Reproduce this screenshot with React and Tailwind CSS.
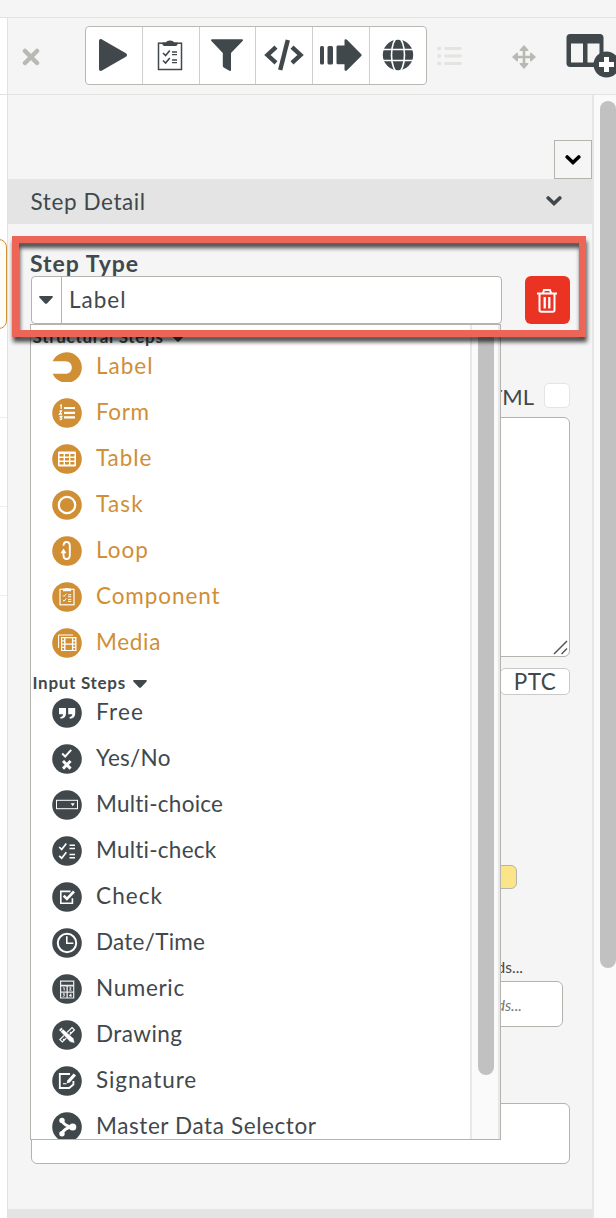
import React from "react";
import clsx from "clsx";

const Disc = ({ children }) => (
  <svg className="w-[30px] h-[30px] shrink-0" viewBox="0 0 30 30" fill="none">
    <circle cx="15" cy="15" r="14.8" fill="currentColor" />
    {children}
  </svg>
);

const LabelIcon = () => (
  <svg className="w-[30px] h-[30px] shrink-0" viewBox="0 0 30 30">
    <path
      fill="currentColor"
      d="M0.6 9.2A15.3 15.3 0 1 1 0.6 21.8H13.5C17.5 21.8 19.8 19 19.8 15.5S17.5 9.2 13.5 9.2Z"
    />
  </svg>
);

const FormIcon = () => (
  <Disc>
    <path d="M12 10h11M12 14.8h11M12 19.4h11" stroke="#fff" strokeWidth="2.2" />
    <path
      d="M8 7.5l1.2-.5v4M7.5 13h2l-2 3h2.5M7.5 18.3h2.3l-1.3 1.5c2 0 1.6 2.3-.9 1.8"
      stroke="#fff"
      strokeWidth="1.3"
    />
  </Disc>
);

const TableIcon = () => (
  <Disc>
    <rect x="6" y="7.4" width="18" height="15" rx="1.2" fill="#fff" />
    <path
      d="M7.6 10h4v2.4h-4zM13 10h4v2.4h-4zM18.4 10h4v2.4h-4zM7.6 14h4v2.4h-4zM13 14h4v2.4h-4zM18.4 14h4v2.4h-4zM7.6 18h4v2.4h-4zM13 18h4v2.4h-4zM18.4 18h4v2.4h-4z"
      fill="currentColor"
    />
  </Disc>
);

const TaskIcon = () => (
  <Disc>
    <circle cx="15" cy="15" r="8.2" stroke="#fff" strokeWidth="2.2" />
  </Disc>
);

const LoopIcon = () => (
  <Disc>
    <path
      d="M11.5 9.8C11.5 7.3 12.7 6 14.6 6s3.2 1.5 3.2 4v9c0 2.5-1.2 4-3.2 4s-3.1-1.3-3.1-3.5v-3"
      stroke="#fff"
      strokeWidth="1.9"
    />
    <path d="M11.5 12.5l3 4.7h-6z" fill="#fff" />
  </Disc>
);

const ComponentIcon = () => (
  <Disc>
    <rect x="8" y="7.3" width="14" height="15.5" stroke="#fff" strokeWidth="1.2" />
    <path d="M11 6.5h2.2c.3-.8 3.3-.8 3.6 0H19v2.7h-8z" fill="#fff" />
    <path
      d="M10.8 13.3l1.2 1.2 2.3-2.8M10.8 18l1.2 1.2 2.3-2.8M16 12.8h3.3M16 14.8h3.3M16 17.4h3.3M16 19.4h3.3"
      stroke="#fff"
      strokeWidth="1"
    />
  </Disc>
);

const MediaIcon = () => (
  <Disc>
    <path d="M6.6 20V7H21" stroke="#fff" strokeWidth="1" />
    <path d="M9 9h15.5v14H9z" fill="#fff" />
    <path
      d="M13.5 10.2h6.4v5.3h-6.4zM13.5 16.7h6.4V22h-6.4zM10.2 10.2h1.9v2h-1.9zM10.2 13.5h1.9v2h-1.9zM10.2 16.7h1.9v2h-1.9zM10.2 20h1.9v2h-1.9zM21.3 10.2h1.9v2h-1.9zM21.3 13.5h1.9v2h-1.9zM21.3 16.7h1.9v2h-1.9zM21.3 20h1.9v2h-1.9z"
      fill="currentColor"
    />
  </Disc>
);

const FreeIcon = () => (
  <Disc>
    <path
      d="M7 10h7v5.5c0 3-1.8 5-5.3 5.3l-.5-1.8c2-.4 2.9-1.4 2.9-2.8H7zM16.2 10h7v5.5c0 3-1.8 5-5.3 5.3l-.5-1.8c2-.4 2.9-1.4 2.9-2.8h-4.1z"
      fill="#fff"
    />
  </Disc>
);

const YesNoIcon = () => (
  <Disc>
    <path d="M10.2 9.5l3 3 6-6.7" stroke="#fff" strokeWidth="2" />
    <path d="M11 17l7.6 7.6M18.6 17L11 24.6" stroke="#fff" strokeWidth="2.9" />
  </Disc>
);

const MultiChoiceIcon = () => (
  <Disc>
    <rect x="4.5" y="10.3" width="21" height="8.4" stroke="#fff" strokeWidth="1" />
    <path d="M18.7 13.3h4l-2 3z" fill="#fff" />
  </Disc>
);

const MultiCheckIcon = () => (
  <Disc>
    <path d="M7.2 11l2.5 2.4 4.6-6M7.2 19.8l2.5 2.4 4.6-6" stroke="#fff" strokeWidth="1.7" />
    <path d="M17.5 9.3H23M17.5 12.4H23M17.5 18.4H23M17.5 21.7H23" stroke="#fff" strokeWidth="1.5" />
  </Disc>
);

const CheckIcon = () => (
  <Disc>
    <path d="M18.5 9.4H8.8v11.8h11.6v-5" stroke="#fff" strokeWidth="1.6" />
    <path d="M11.7 13.6l3.2 3.3L22 9.5" stroke="#fff" strokeWidth="2.6" />
  </Disc>
);

const ClockIcon = () => (
  <Disc>
    <circle cx="15" cy="15" r="9.2" stroke="#fff" strokeWidth="2" />
    <path d="M14.8 8.2v7h6.6" stroke="#fff" strokeWidth="1.6" />
  </Disc>
);

const NumericIcon = () => (
  <Disc>
    <path d="M8 6.5h14.3v18H8z" fill="#fff" opacity=".9" />
    <path d="M9.2 7.8h11.9v3H9.2zM9.2 12.4h5.3v5H9.2zM15.8 12.4h5.3v5h-5.3zM9.2 18.8h5.3v4.6H9.2zM15.8 18.8h5.3v4.6h-5.3z" fill="currentColor" />
    <path
      d="M11.2 13.8h1v2.8M17.3 13.8h1.8l-1.5 2.4h1.9M10.8 19.8h1.8l-1 1.3c1.4 0 1.2 1.5-.8 1.3M18.9 22.8v-3l-1.6 2h2.3"
      stroke="#fff"
      strokeWidth=".9"
    />
  </Disc>
);

const DrawingIcon = () => (
  <Disc>
    <path d="M20 7.5l2.4 2.4L10.3 22l-2.4-2.4zM18 12l1.6 1.6M11 19l1.6 1.6" stroke="#fff" strokeWidth="1.2" />
    <path d="M6.8 10l2.5-2.5 12.4 11 1 4.8-4.6-1.4z" fill="#fff" stroke="currentColor" strokeWidth=".5" />
    <path d="M8.5 11.7l2.6-2.6" stroke="currentColor" strokeWidth=".8" />
  </Disc>
);

const SignatureIcon = () => (
  <Disc>
    <path d="M18 8H7.8v14h9.4l4.2-3.5V15" stroke="#fff" strokeWidth="1.8" />
    <path d="M15.3 14.5l6.3-7 2.4 2-6.2 7-3 .8z" fill="#fff" />
    <path d="M11 17.7h3.5" stroke="#fff" strokeWidth="1.1" />
  </Disc>
);

const MasterIcon = () => (
  <Disc>
    <path d="M10 8.5c1.5 4 5 6 10.5 6.5-5.5.5-9 3-10.5 6.5" stroke="#fff" strokeWidth="2.8" />
    <circle cx="10" cy="8.5" r="2.7" fill="#fff" />
    <circle cx="20.7" cy="15" r="3.6" fill="#fff" />
    <circle cx="10" cy="21.7" r="2.7" fill="#fff" />
  </Disc>
);

const structuralSteps = [
  { label: "Label", icon: LabelIcon, spacing: "tracking-[1px]" },
  { label: "Form", icon: FormIcon, spacing: "tracking-[0.6px]" },
  { label: "Table", icon: TableIcon, spacing: "tracking-[0.9px]" },
  { label: "Task", icon: TaskIcon, spacing: "tracking-[1.2px]" },
  { label: "Loop", icon: LoopIcon, spacing: "tracking-[1px]" },
  { label: "Component", icon: ComponentIcon, spacing: "tracking-[0.9px]" },
  { label: "Media", icon: MediaIcon, spacing: "tracking-[0.7px]" },
];

const inputSteps = [
  { label: "Free", icon: FreeIcon, spacing: "tracking-[1.2px]" },
  { label: "Yes/No", icon: YesNoIcon, spacing: "tracking-[0.3px]" },
  { label: "Multi-choice", icon: MultiChoiceIcon, spacing: "tracking-[0.25px]" },
  { label: "Multi-check", icon: MultiCheckIcon, spacing: "tracking-[0.25px]" },
  { label: "Check", icon: CheckIcon, spacing: "tracking-[1.1px]" },
  { label: "Date/Time", icon: ClockIcon, spacing: "tracking-[0.25px]" },
  { label: "Numeric", icon: NumericIcon, spacing: "tracking-[0.65px]" },
  { label: "Drawing", icon: DrawingIcon },
  { label: "Signature", icon: SignatureIcon, spacing: "tracking-[0.9px]" },
  { label: "Master Data Selector", icon: MasterIcon, spacing: "tracking-[0.6px]" },
];

const Caret = ({ className }) => (
  <svg className={className} viewBox="0 0 14 8" fill="currentColor">
    <path d="M1 0h12c.9 0 1.2.9.6 1.5L8 7.4c-.6.6-1.4.6-2 0L.4 1.5C-.2.9.1 0 1 0Z" />
  </svg>
);

const Chevron = ({ className }) => (
  <svg className={className} viewBox="0 0 16 10" fill="none" stroke="currentColor">
    <path d="M2.2 2L8 7.5 13.8 2" strokeWidth="3.6" strokeLinecap="round" />
  </svg>
);

const GroupTitle = ({ children }) => (
  <div className="h-6 pl-[1.5px] pt-[9px] flex items-center gap-[7px] text-[17px] leading-[18px] font-bold tracking-[0.7px]">
    {children}
    <Caret className="w-[14px] h-2 mt-[2px]" />
  </div>
);

const StepOption = ({ label, icon: Icon, spacing = "tracking-[0.45px]" }) => (
  <div className="h-[46px] pl-[20.5px] flex items-center gap-[14.5px] text-[22.5px]">
    <Icon />
    <span className={clsx("pb-[1.5px] whitespace-nowrap", spacing)}>{label}</span>
  </div>
);

const StepDropdown = () => (
  <div className="absolute left-[-1px] top-[48px] w-[471px] h-[816px] flex bg-white border border-[#b4b3ae] overflow-hidden">
    <div className="flex-1 -mt-[5px]">
      <GroupTitle>Structural Steps</GroupTitle>
      <div className="text-[#d08e35]">
        {structuralSteps.map((step) => (
          <StepOption key={step.label} {...step} />
        ))}
      </div>
      <GroupTitle>Input Steps</GroupTitle>
      {inputSteps.map((step) => (
        <StepOption key={step.label} {...step} />
      ))}
    </div>
    <div className="w-[30px] shrink-0 bg-[#fafafa] border-l-2 border-r-2 border-[#e8e8e8] pl-[6px] pt-[6px]">
      <div className="w-4 h-[744px] rounded-full bg-[#c1c1c1]"></div>
    </div>
  </div>
);

const PlayIcon = () => (
  <svg className="w-[28px] h-[32px]" viewBox="0 0 28 32" fill="currentColor">
    <path d="M0 2C0 .3 1.5-.4 3 .4l23.5 13.5c2 1.2 2 3 0 4.2L3 31.6c-1.5.8-3 .1-3-1.6Z" />
  </svg>
);

const ClipboardIcon = () => (
  <svg className="w-[26px] h-[31px]" viewBox="0 0 26 31" fill="none" stroke="currentColor">
    <rect x="1.5" y="3.2" width="23" height="26.3" strokeWidth="1.5" />
    <path d="M6 2.5h3C9.5-.2 16.5-.2 17 2.5h3c1 0 1 3.5-1.5 3.5h-11C5 6 5 2.5 6 2.5Z" fill="currentColor" stroke="none" />
    <path d="M6 13l2.6 2.5 4.2-5M6 20.5L8.6 23l4.2-5" strokeWidth="1.6" />
    <path d="M15 12h5M15 14.7h5M15 20h5M15 22.7h5" strokeWidth="1.3" />
  </svg>
);

const FunnelIcon = () => (
  <svg className="w-[32px] h-[32px]" viewBox="0 0 32 32" fill="currentColor">
    <path d="M1 .3h30c1 0 1.2 1 .6 1.7L20 14v17c0 1-.8 1.2-1.6.7l-5.7-3.2c-.6-.4-.9-.8-.9-1.5V14L.4 2C-.2 1.3 0 .3 1 .3Z" />
  </svg>
);

const CodeIcon = () => (
  <svg className="w-[40px] h-[32px]" viewBox="0 0 40 32" fill="none" stroke="currentColor" strokeWidth="4.4">
    <path d="M12 8.2L3.5 16l8.5 7.8M28 8.2l8.5 7.8-8.5 7.8" />
    <path d="M23.8 1l-7.6 30" />
  </svg>
);

const ArrowIcon = () => (
  <svg className="w-[42px] h-[32px]" viewBox="0 0 42 32" fill="currentColor">
    <rect x="0" y="7" width="4" height="18.5" rx="1.5" />
    <rect x="7.5" y="7" width="5.5" height="18.5" rx="1.5" />
    <path d="M18 6.5h6.5V1.5c0-1.5 1.5-1.7 2.5-.7L41 15c.8.8.8 1.5 0 2.3L27 31.2c-1 1-2.5.7-2.5-.7v-5.3H18c-1 0-1.5-.5-1.5-1.5V8c0-1 .5-1.5 1.5-1.5Z" />
  </svg>
);

const GlobeIcon = () => (
  <svg className="w-[32px] h-[32px]" viewBox="0 0 32 32" fill="none">
    <circle cx="16" cy="16" r="15.2" fill="currentColor" />
    <g stroke="#fff" strokeWidth="1.6">
      <path d="M0 10.5h32M0 21.5h32" />
      <ellipse cx="16" cy="16" rx="6.5" ry="17" />
    </g>
  </svg>
);

const ListIcon = () => (
  <svg className="w-[25px] h-5 text-[#e3e3e1]" viewBox="0 0 25 20">
    <g fill="currentColor">
      <circle cx="2.2" cy="2.5" r="2.1" />
      <circle cx="2.2" cy="10" r="2.1" />
      <circle cx="2.2" cy="17.5" r="2.1" />
    </g>
    <path d="M8.5 2.5h15M8.5 10h15M8.5 17.5h15" stroke="currentColor" strokeWidth="2.8" strokeLinecap="round" />
  </svg>
);

const MoveIcon = () => (
  <svg className="w-6 h-6 text-[#b9b9b4]" viewBox="0 0 24 24" fill="currentColor">
    <path d="M4 10.7h16v2.6H4zM10.7 4h2.6v16h-2.6z" />
    <path
      d="M12 1l3.7 4.2H8.3zM12 23l3.7-4.2H8.3zM1 12l4.2-3.7v7.4zM23 12l-4.2-3.7v7.4z"
      stroke="currentColor"
      strokeWidth="1.5"
      strokeLinejoin="round"
    />
  </svg>
);

const AddColumnIcon = () => (
  <svg className="w-[50px] h-11" viewBox="0 0 50 44">
    <path
      fill="currentColor"
      fillRule="evenodd"
      d="M4 0h30c2 0 3.5 1.5 3.5 3.5v26c0 2-1.5 3.5-3.5 3.5H4c-2 0-3.5-1.5-3.5-3.5v-26C.5 1.5 2 0 4 0ZM5 9.5v19h12v-19ZM21.5 9.5v19h12v-19Z"
    />
    <circle cx="40.5" cy="30.5" r="13" fill="currentColor" />
    <path d="M33 30.5h15M40.5 23v15" stroke="#fff" strokeWidth="5" />
  </svg>
);

const tools = [PlayIcon, ClipboardIcon, FunnelIcon, CodeIcon, ArrowIcon, GlobeIcon];

const Toolbar = () => (
  <div className="h-[77px] shrink-0 flex items-start border-b border-[#e2e2e2] overflow-hidden">
    <svg className="w-[18px] h-[18px] mt-[30px] ml-[13.5px] text-[#b9b9b4]" viewBox="0 0 18 18">
      <path d="M3 3l12 12M15 3L3 15" stroke="currentColor" strokeWidth="4.5" strokeLinecap="round" />
    </svg>
    <div className="w-[342px] h-[59px] mt-2 ml-[45.5px] shrink-0 flex bg-white border border-[#b9b9b4] rounded divide-x divide-[#cfcfcb]">
      {tools.map((Tool, i) => (
        <div key={i} className="flex-1 pb-px pr-px flex items-center justify-center">
          <Tool />
        </div>
      ))}
    </div>
    <div className="mt-[28px] ml-[10px] shrink-0">
      <ListIcon />
    </div>
    <div className="mt-[27px] ml-[50px] shrink-0">
      <MoveIcon />
    </div>
    <div className="mt-[16px] ml-[30px] shrink-0">
      <AddColumnIcon />
    </div>
  </div>
);

const StepPanel = () => (
  <div className="w-[584px] shrink-0 flex flex-col">
    <div className="h-[84px] flex items-end justify-end">
      <button className="w-[38px] h-[39px] flex items-center justify-center border border-[#b4b3ae] text-black">
        <Chevron className="w-4 h-[10px]" />
      </button>
    </div>
    <div className="h-[45px] pl-[22.5px] pr-[30px] flex items-center justify-between bg-[#e4e4e4]">
      <span className="text-[22.5px] tracking-[0.6px]">Step Detail</span>
      <Chevron className="w-4 h-[10px] mb-[2px]" />
    </div>

    <div className="pl-[23px] pr-[22px]">
      <div className="relative pt-[27px]">
        <div className="h-[25px] -ml-px text-[23px] leading-[24px] font-bold tracking-[1px]">Step Type</div>
        <div className="relative flex justify-between">
          <div className="w-[471px] h-12 flex items-center bg-white border border-[#b4b3ae] rounded">
            <div className="w-[30px] h-full pr-px flex items-center justify-center border-r border-[#b4b3ae]">
              <Caret className="w-[14px] h-2" />
            </div>
            <span className="pl-[7px] text-[22.5px] tracking-[1px]">Label</span>
          </div>
          <button className="w-[45px] h-12 pr-px flex items-center justify-center rounded-md bg-[#ea3323] text-white">
            <svg className="w-[22px] h-[26px] mt-[2px]" viewBox="0 0 22 26" fill="none" stroke="currentColor">
              <path d="M1 5.5h20M7 5l1-3h6l1 3" strokeWidth="2" />
              <path d="M3.5 5.5V22c0 1.2.5 1.8 1.7 1.8h11.6c1.2 0 1.7-.6 1.7-1.8V5.5" strokeWidth="2" />
              <path d="M8.7 9v11.5M13.3 9v11.5" strokeWidth="2.3" />
            </svg>
          </button>
          <StepDropdown />
        </div>
        {/* callout around the step type field */}
        <div className="absolute left-[-19px] top-[12px] w-[574px] h-[101px] border-[7px] border-[#ec6556] drop-shadow-[1px_5px_2px_rgba(0,0,0,0.7)]"></div>
      </div>

      <div className="h-[25px] pt-[2px] mt-[59px] flex items-center justify-end gap-[10px] text-[22px]">
        HTML
        <span className="w-[26px] h-[25px] -mt-[2px] bg-white border border-[#e4e4e4] rounded-[5px]"></span>
      </div>
      <div className="h-[240px] mt-[9px] flex items-end justify-end bg-white border border-[#b4b3ae] rounded-md">
        <svg className="w-[15px] h-[15px] mr-[1px] mb-[1px]" viewBox="0 0 15 15" stroke="#555" strokeWidth="1.5">
          <path d="M1 14L14 1M8.5 14L14 8.5" />
        </svg>
      </div>
      <div className="mt-[11px] flex justify-end">
        <span className="w-[70px] h-[27px] flex items-center justify-center bg-white border border-[#c9c9c9] rounded-[5px] text-[22.5px] tracking-[0.4px]">
          PTC
        </span>
      </div>
      <div className="w-[486px] h-6 mt-[170px] bg-[#fbe588] border border-[#b4b3ae] rounded-md"></div>
      <div className="w-[492px] mt-[69px] h-[21px] flex justify-end text-[15.5px] leading-[18px]">
        Search fields...
      </div>
      <div className="w-[532px] h-[46px] mt-[2px] pt-[4px] pr-[40px] flex items-center justify-end bg-white border border-[#b4b3ae] rounded-md text-[15.5px] italic text-[#777]">
        Search fields...
      </div>
      <div className="h-[61px] mt-[76px] bg-white border border-[#b4b3ae] rounded-md"></div>
    </div>
    <div className="mt-[45px] flex-1 bg-[#e4e4e4]"></div>
  </div>
);

const StepRail = () => (
  <div className="w-2 shrink-0 flex flex-col bg-white border-r border-[#e2e2e2] overflow-hidden">
    <div className="h-[77px] shrink-0 border-b border-[#e2e2e2]"></div>
    <div className="h-[90px] w-[20px] mt-[144px] -ml-[13px] shrink-0 bg-[#fffdf7] border border-[#d08e35] rounded-lg"></div>
    <div className="h-[89px] shrink-0 border-b border-[#eeeeee]"></div>
    <div className="h-[89px] shrink-0 border-b border-[#eeeeee]"></div>
    <div className="h-[89px] shrink-0 border-b border-[#eeeeee]"></div>
  </div>
);

const App = () => {
  return (
    <div className="w-[616px] h-[1218px] flex flex-col overflow-hidden bg-[#f5f5f5] text-[#41484c] font-['Lato',sans-serif]">
      <div className="h-[18px] shrink-0 border-b border-[#e2e2e2]"></div>
      <div className="flex-1 flex">
        <StepRail />
        <div className="w-[608px] flex flex-col">
          <Toolbar />
          <div className="flex-1 flex">
            <StepPanel />
            <div className="flex-1 pl-[6px] pt-[6px] bg-[#fafafa] border-l-2 border-[#e6e6e6]">
              <div className="w-4 h-[867px] rounded-full bg-[#c1c1c1]"></div>
            </div>
          </div>
        </div>
      </div>
    </div>
  );
};

export default App;
